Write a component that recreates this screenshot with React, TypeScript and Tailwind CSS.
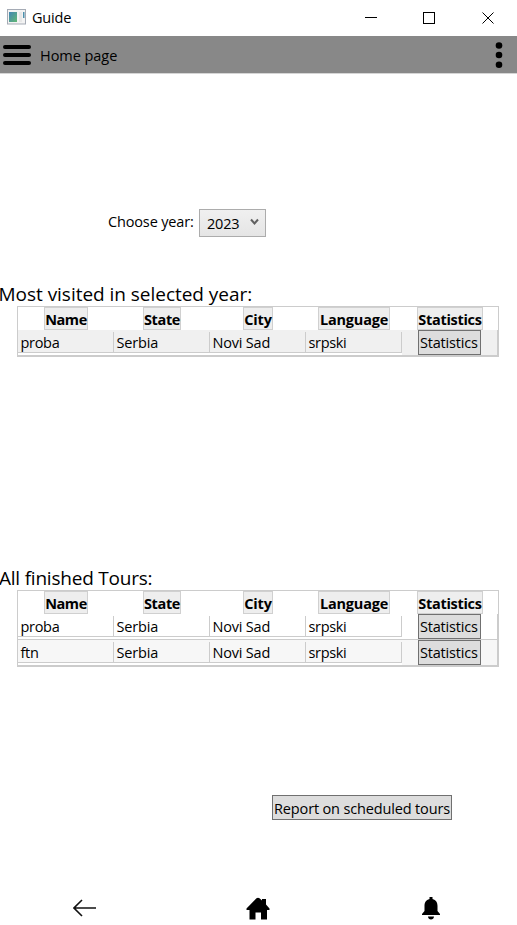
import React from "react";

const columns = [
  { title: "Name", chip: "ml-[26px] w-[44px]", text: "tracking-[-0.45px]" },
  { title: "State", chip: "ml-[29px] w-[38px]", text: "tracking-[-0.35px]" },
  { title: "City", chip: "ml-[33px] w-[30px]", text: "tracking-[-0.2px]" },
  { title: "Language", chip: "ml-[12px] w-[72px]", text: "tracking-[-0.2px]" },
  { title: "Statistics", chip: "ml-[15px] w-[66px]", text: "tracking-[-0.3px]" },
];

const cellTracking = ["tracking-[-0.3px]", "tracking-[-0.15px]", "tracking-[-0.2px]", "tracking-[-0.35px]"];

type TourRow = { cells: string[]; bg: string };

function HeaderRow() {
  return (
    <div className="flex h-[23px]">
      {columns.map((c) => (
        <div key={c.title} className="w-[96px] shrink-0">
          <div
            className={`flex h-[23px] items-center justify-center border border-[#d0d0d0] bg-[#eeeeee] pt-[2px] font-bold whitespace-nowrap text-[14.5px] ${c.chip} ${c.text}`}
          >
            {c.title}
          </div>
        </div>
      ))}
    </div>
  );
}

function Row({ row, last }: { row: TourRow; last: boolean }) {
  return (
    <div className={`flex h-[26px] border-r border-b border-[#cccccc] ${row.bg}`}>
      {row.cells.map((cell, i) => (
        <div key={i} className="h-[25px] w-[96px] shrink-0 bg-white">
          <div className={`h-[2px] ${last ? row.bg : "bg-white"}`} />
          <div
            className={`flex h-[21px] items-center border-r border-b border-[#cccccc] pt-[2px] pl-[2.5px] text-[14.5px] whitespace-nowrap ${row.bg} ${cellTracking[i]}`}
          >
            {cell}
          </div>
        </div>
      ))}
      <button className="ml-[16px] h-[25px] w-[63px] shrink-0 border border-[#707070] bg-[#dddddd] pl-[1px] text-left text-[14.5px] leading-[23px] tracking-[-0.2px] whitespace-nowrap">
        Statistics
      </button>
    </div>
  );
}

function ToursTable({ rows }: { rows: TourRow[] }) {
  return (
    <div className="ml-[17px] w-[482px] border border-[#cccccc]">
      <HeaderRow />
      {rows.map((row, i) => (
        <Row key={i} row={row} last={i === rows.length - 1} />
      ))}
    </div>
  );
}

export default function App() {
  return (
    <div className="flex h-[925px] w-[517px] flex-col overflow-hidden bg-white font-['Open_Sans','Noto_Sans',sans-serif] text-black">
      <div className="flex h-[36px] shrink-0 items-center">
        <svg className="ml-[7px] -mt-[2px]" width="19" height="16" viewBox="0 0 19 16">
          <defs>
            <linearGradient id="appIcon" x1="0" y1="0" x2="1" y2="1">
              <stop offset="0" stopColor="#4385b5" />
              <stop offset="1" stopColor="#62b873" />
            </linearGradient>
          </defs>
          <rect x=".5" y=".5" width="18" height="14.5" fill="#f3f3f3" stroke="#a5abb5" />
          <rect x="2" y="3" width="8" height="10" fill="url(#appIcon)" />
          <rect x="12" y="3" width="3" height="10" fill="#e7e7e7" />
          <rect x="16" y="3" width="1.5" height="6" fill="#4d90ac" />
        </svg>
        <span className="ml-[6px] text-[14.5px] leading-5 tracking-[-0.2px]">Guide</span>
        <svg className="ml-auto mr-[22px] -mt-[1px]" width="131" height="14" viewBox="0 0 131 14" fill="none" stroke="black" shapeRendering="crispEdges">
          <path d="M1 6.5h12" />
          <rect x="59.5" y="1.5" width="11" height="11" />
          <path d="M118.5 1.5l11 11M129.5 1.5l-11 11" shapeRendering="auto" />
        </svg>
      </div>

      <div className="flex h-[38px] shrink-0 items-center border-b border-[#d5d5d5] bg-[#888888]">
        <svg className="ml-[3px]" width="28" height="20" viewBox="0 0 28 20" stroke="black" strokeWidth="4" strokeLinecap="round">
          <path d="M2 2h24M2 10h24M2 18h24" />
        </svg>
        <span className="ml-[9px] mt-[2px] text-[14.5px] leading-5 tracking-[-0.05px]">Home page</span>
        <svg className="ml-auto mr-[14px]" width="8" height="26" viewBox="0 0 8 26">
          <circle cx="4" cy="3.5" r="3.3" />
          <circle cx="4" cy="13" r="3.3" />
          <circle cx="4" cy="22.7" r="3.3" />
        </svg>
      </div>

      <div className="mt-[135px] ml-[108px] flex h-[28px] shrink-0">
        <span className="w-[91px] text-[14.5px] leading-[26px] tracking-[-0.15px] whitespace-nowrap">Choose year:</span>
        <div className="flex h-[28px] w-[67px] items-center border border-[#acacac] bg-linear-to-b from-[#f0f0f0] to-[#e5e5e5] pl-[7px]">
          <span className="pt-[2px] text-[14.5px] leading-5 tracking-[-0.2px]">2023</span>
          <svg className="ml-auto mr-[6px] -mt-[2px]" width="9" height="8" viewBox="0 0 9 8" fill="none" stroke="#606060" strokeWidth="2">
            <path d="M1 1.500l3.500 4 3.500-4" />
          </svg>
        </div>
      </div>

      <section className="mt-[45px] flex h-[284px] shrink-0 flex-col">
        <h2 className="-ml-[1.5px] h-[24px] text-[19px] leading-[24px] tracking-[-0.03px] whitespace-nowrap">Most visited in selected year:</h2>
        <ToursTable rows={[{ cells: ["proba", "Serbia", "Novi Sad", "srpski"], bg: "bg-[#f0f0f0]" }]} />
      </section>

      <section className="flex h-[229px] shrink-0 flex-col">
        <h2 className="-ml-[1px] h-[24px] text-[19px] leading-[24px] tracking-[-0.22px] whitespace-nowrap">All finished Tours:</h2>
        <ToursTable
          rows={[
            { cells: ["proba", "Serbia", "Novi Sad", "srpski"], bg: "bg-white" },
            { cells: ["ftn", "Serbia", "Novi Sad", "srpski"], bg: "bg-[#f7f7f7]" },
          ]}
        />
      </section>

      <button className="ml-[272px] h-[25px] w-[180px] shrink-0 border border-[#707070] bg-[#dddddd] pt-[1px] text-[14.5px] leading-[24px] tracking-[-0.15px] whitespace-nowrap">
        Report on scheduled tours
      </button>

      <nav className="mt-[74px] flex h-[28px] shrink-0 items-center">
        <svg className="ml-[73px]" width="23" height="18" viewBox="0 0 23 18" fill="none" stroke="#111111" strokeWidth="1.6">
          <path d="M23 9H1M9 1L1 9l8 8" />
        </svg>
        <svg className="ml-[150px]" width="24" height="23" viewBox="0 0 24 23">
          <path d="M.5 11.500L10.500 1.300q1.500-1.300 3 0L16 3.500V2h4v5.500l3.500 4V13H21v9.500h-6v-7H9.500v7h-6V13h-3z" />
        </svg>
        <svg className="ml-[152px]" width="18" height="23" viewBox="0 0 18 23">
          <path d="M7.500 2V0h3v2c3.500.8 5 3.500 5 7v5l2.500 3v1H0v-1l2.500-3V9c0-3.500 1.500-6.200 5-7zM6 19.500h6c0 1.800-1.500 3-3 3s-3-1.200-3-3z" />
        </svg>
      </nav>
    </div>
  );
}
